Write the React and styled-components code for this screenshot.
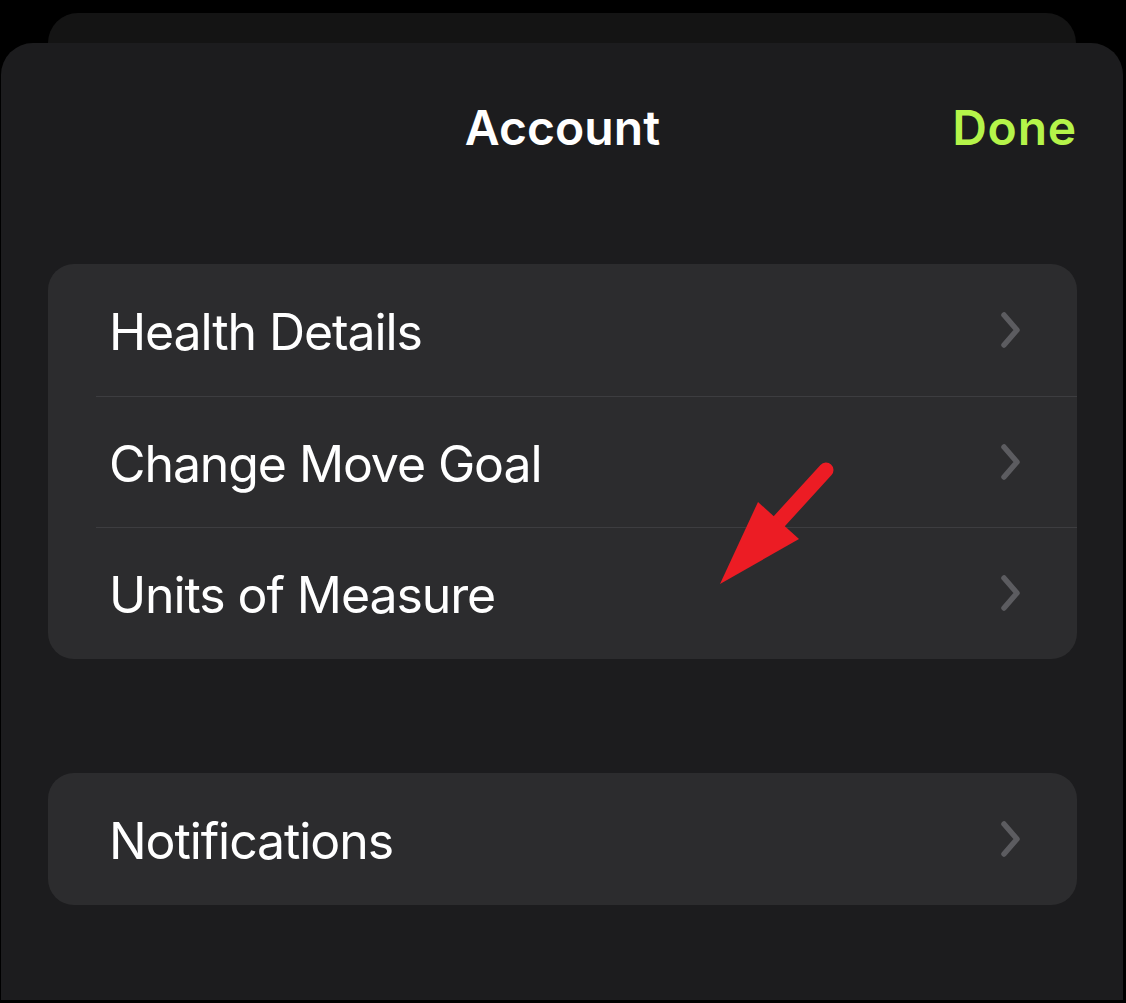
import React from "react";
import styled, { createGlobalStyle } from "styled-components";

const Global = createGlobalStyle`
  html, body {
    margin: 0;
    padding: 0;
    background: #000;
  }
  body {
    font-family: Inter, "Noto Sans", "Liberation Sans", sans-serif;
    -webkit-font-smoothing: antialiased;
  }
`;

const Screen = styled.div`
  position: relative;
  width: 1126px;
  height: 1003px;
  background: #000;
  overflow: hidden;
  padding-top: 13px;
  box-sizing: border-box;
`;

const BackSheet = styled.div`
  margin: 0 50px 0 48px;
  height: 60px;
  background: #141414;
  border-radius: 30px 30px 0 0;
`;

const Sheet = styled.div`
  margin: -30px 3px 0 1px;
  height: 957px;
  background: #1c1c1e;
  border-radius: 32px 32px 0 0;
  position: relative;
  padding: 0 46px 0 47px;
  box-sizing: border-box;
`;

const Header = styled.div`
  display: grid;
  grid-template-columns: 1fr auto 1fr;
  align-items: center;
  height: 168px;
  box-sizing: border-box;
`;

const Title = styled.h1`
  grid-column: 2;
  margin: 0;
  color: #fff;
  font-size: 48px;
  font-weight: 600;
  letter-spacing: 0.1px;
`;

const Done = styled.button`
  grid-column: 3;
  justify-self: end;
  background: none;
  border: none;
  padding: 0;
  color: #b5f44a;
  font-family: inherit;
  font-size: 48px;
  font-weight: 600;
  letter-spacing: 0.8px;
`;

const Group = styled.div`
  margin-top: ${(p) => p.$top}px;
  background: #2c2c2e;
  border-radius: 26px;
  overflow: hidden;
`;

const Row = styled.div`
  position: relative;
  display: flex;
  align-items: center;
  justify-content: space-between;
  height: 131.7px;
  padding: 4px 54px 0 61px;
  box-sizing: border-box;

  & + &::before {
    content: "";
    position: absolute;
    top: 0;
    left: 48px;
    right: 0;
    height: 1px;
    background: #3d3d40;
  }
`;

const Label = styled.span`
  color: #fff;
  font-size: 50px;
  font-weight: 400;
  letter-spacing: -1.1px;
`;

const Chevron = () => (
  <svg width="24" height="40" viewBox="0 0 24 40" style={{ marginTop: -4 }}>
    <path
      d="M5 5 L18 20 L5 35"
      fill="none"
      stroke="#5c5c60"
      strokeWidth="5.5"
      strokeLinecap="round"
      strokeLinejoin="round"
    />
  </svg>
);

const Arrow = styled.svg`
  position: absolute;
  left: 0;
  top: 0;
  pointer-events: none;
`;

const items = ["Health Details", "Change Move Goal", "Units of Measure"];

const App = () => {
  return (
    <Screen>
      <Global />
      <BackSheet />
      <Sheet>
        <Header>
          <Title>Account</Title>
          <Done>Done</Done>
        </Header>
        <Group $top={53}>
          {items.map((t) => (
            <Row key={t}>
              <Label>{t}</Label>
              <Chevron />
            </Row>
          ))}
        </Group>
        <Group $top={114}>
          <Row>
            <Label>Notifications</Label>
            <Chevron />
          </Row>
        </Group>
      </Sheet>
      <Arrow width="1126" height="1003" viewBox="0 0 1126 1003">
        <line
          x1="826"
          y1="470"
          x2="774"
          y2="527"
          stroke="#ec1c24"
          strokeWidth="15"
          strokeLinecap="round"
        />
        <polygon points="720,584 758,502 799,539" fill="#ec1c24" />
      </Arrow>
    </Screen>
  );
};

export default App;
